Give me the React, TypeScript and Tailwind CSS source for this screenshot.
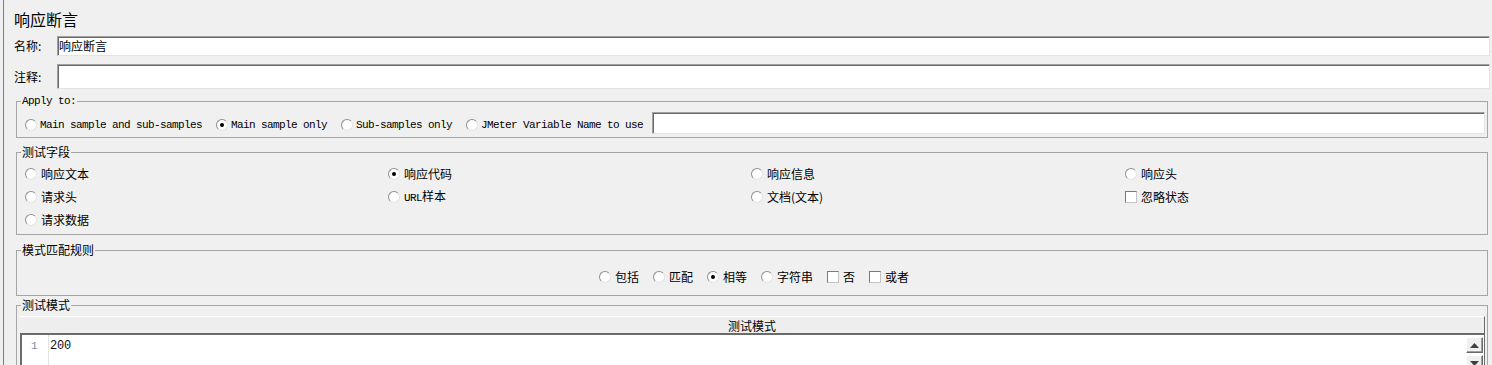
import React from "react";

function Radio({ checked = false }: { checked?: boolean }) {
  return (
    <span className="relative inline-block h-[12px] w-[12px] shrink-0 rounded-full border border-t-[#8f8f8f] border-l-[#8f8f8f] border-r-[#e3e3e3] border-b-[#e3e3e3] bg-white">
      {checked && (
        <span className="absolute left-[3px] top-[3px] h-[4px] w-[4px] rounded-full bg-black" />
      )}
    </span>
  );
}

function Check() {
  return (
    <span className="inline-block h-[12px] w-[12px] shrink-0 border border-t-[#7a7a7a] border-l-[#7a7a7a] border-r-[#c4c4c4] border-b-[#c4c4c4] bg-white" />
  );
}

function Opt({
  kind = "radio",
  checked = false,
  children,
}: {
  kind?: "radio" | "check";
  checked?: boolean;
  children: React.ReactNode;
}) {
  return (
    <span className="flex items-center gap-[4px] whitespace-nowrap text-[12px] leading-[16px]">
      {kind === "radio" ? <Radio checked={checked} /> : <Check />}
      <span>{children}</span>
    </span>
  );
}

function MonoOpt({ checked = false, children }: { checked?: boolean; children: React.ReactNode }) {
  return (
    <span className="mt-[3px] flex items-center gap-[3px] whitespace-nowrap">
      <Radio checked={checked} />
      <span className="font-['Liberation_Mono',monospace] text-[11px] leading-[16px] tracking-[-0.6px]">
        {children}
      </span>
    </span>
  );
}

function TextBox({ h, children }: { h: string; children?: React.ReactNode }) {
  return (
    <div
      className={`flex flex-1 items-center border border-t-[#a0a0a0] border-l-[#a0a0a0] border-r-[#e3e3e3] border-b-[#e3e3e3] bg-white pl-[1px] text-[12px] leading-[16px] shadow-[inset_1px_1px_0_#696969] ${h}`}
    >
      {children}
    </div>
  );
}

export default function App() {
  return (
    <div className="h-[365px] w-[1492px] overflow-hidden bg-[#f0f0f0] font-['Noto_Sans_CJK_SC','Noto_Sans',sans-serif] text-black">
      <div className="ml-[3px] flex h-full flex-col border-l border-[#7d7d7d]">
        {/* Title */}
        <div className="pl-[10px] pt-[9px] text-[16px] leading-[20px]">响应断言</div>

        {/* Name */}
        <div className="mt-[7px] flex h-[20px] items-center pl-[10px] pr-[2px]">
          <span className="w-[43px] text-[12px] leading-[16px]">名称:</span>
          <TextBox h="h-[20px]">响应断言</TextBox>
        </div>

        {/* Comment */}
        <div className="mt-[8px] flex h-[25px] items-center pl-[10px] pr-[2px]">
          <span className="w-[43px] text-[12px] leading-[16px]">注释:</span>
          <TextBox h="h-[25px]" />
        </div>

        {/* Apply to */}
        <fieldset className="ml-[12px] mr-[4px] mt-[5px] border border-[#a6a6a6]">
          <legend className="ml-[4px] px-[1px] font-['Liberation_Mono',monospace] text-[11px] leading-[14px] tracking-[-0.6px]">
            Apply to:
          </legend>
          <div className="flex items-center pb-[3px] pl-[8px] pr-[2px] pt-[4px]">
            <MonoOpt>Main sample and sub-samples</MonoOpt>
            <span className="w-[14px]" />
            <MonoOpt checked>Main sample only</MonoOpt>
            <span className="w-[14px]" />
            <MonoOpt>Sub-samples only</MonoOpt>
            <span className="w-[14px]" />
            <MonoOpt>JMeter Variable Name to use</MonoOpt>
            <span className="w-[9px]" />
            <TextBox h="h-[22px]" />
          </div>
        </fieldset>

        {/* 测试字段 */}
        <fieldset className="ml-[12px] mr-[4px] mt-[7px] border border-[#a6a6a6]">
          <legend className="ml-[4px] px-[1px] text-[12px] leading-[14px]">测试字段</legend>
          <div className="grid grid-cols-[363px_363px_374px_1fr] auto-rows-[23px] items-center pb-[3px] pl-[8px] pt-[3px]">
            <Opt>响应文本</Opt>
            <Opt checked>响应代码</Opt>
            <Opt>响应信息</Opt>
            <Opt>响应头</Opt>
            <Opt>请求头</Opt>
            <Opt>
              <span className="font-['Liberation_Mono',monospace] text-[11px] tracking-[-0.6px]">URL</span>样本
            </Opt>
            <Opt>文档(文本)</Opt>
            <Opt kind="check">忽略状态</Opt>
            <Opt>请求数据</Opt>
          </div>
        </fieldset>

        {/* 模式匹配规则 */}
        <fieldset className="ml-[12px] mr-[4px] mt-[8px] border border-[#a6a6a6]">
          <legend className="ml-[4px] px-[1px] text-[12px] leading-[14px]">模式匹配规则</legend>
          <div className="flex h-[38px] items-center justify-center gap-[14px] pb-[8px] pl-[4px] pt-[10px]">
            <Opt>包括</Opt>
            <Opt>匹配</Opt>
            <Opt checked>相等</Opt>
            <Opt>字符串</Opt>
            <Opt kind="check">否</Opt>
            <Opt kind="check">或者</Opt>
          </div>
        </fieldset>

        {/* 测试模式 */}
        <fieldset className="ml-[12px] mr-[4px] mt-[2px] min-h-0 flex-1 border border-b-0 border-[#a6a6a6]">
          <legend className="ml-[4px] px-[1px] text-[12px] leading-[14px]">测试模式</legend>
          <div className="flex flex-col pl-[3px] pr-[2px] pt-[4px]">
            <div className="flex h-[19px] items-center justify-center border-t border-r border-b-2 border-t-white border-r-[#6b6b6b] border-b-[#6b6b6b] bg-[#eeeeee] pt-[1px] text-[12px] leading-[16px]">
              测试模式
            </div>
            <div className="flex h-[40px] border-l-2 border-r border-[#6b6b6b] bg-white">
              <div className="w-[27px] border-r border-[#e2e2e2] pl-[9px] pt-[3px] font-['Liberation_Mono',monospace] text-[11px] leading-[16px] text-[#7d8aa3]">
                1
              </div>
              <div className="flex-1 pl-[1px] pt-[3px] font-['Liberation_Mono',monospace] text-[12px] leading-[16px] tracking-[-0.2px] text-[#101010]">
                200
              </div>
              <div className="mr-[1px] mt-[2px] flex w-[17px] flex-col gap-[2px]">
                <div className="flex h-[16px] items-center justify-center border border-t-white border-l-white border-r-[#696969] border-b-[#696969] bg-[#f0f0f0] shadow-[inset_-1px_-1px_0_#a0a0a0]">
                  <svg width="9" height="5" viewBox="0 0 9 5">
                    <polygon points="4.5,0 9,5 0,5" fill="#404040" />
                  </svg>
                </div>
                <div className="flex h-[16px] items-center justify-center border border-t-white border-l-white border-r-[#696969] border-b-[#696969] bg-[#f0f0f0] shadow-[inset_-1px_-1px_0_#a0a0a0]">
                  <svg width="9" height="5" viewBox="0 0 9 5">
                    <polygon points="0,0 9,0 4.5,5" fill="#404040" />
                  </svg>
                </div>
              </div>
            </div>
          </div>
        </fieldset>
      </div>
    </div>
  );
}
